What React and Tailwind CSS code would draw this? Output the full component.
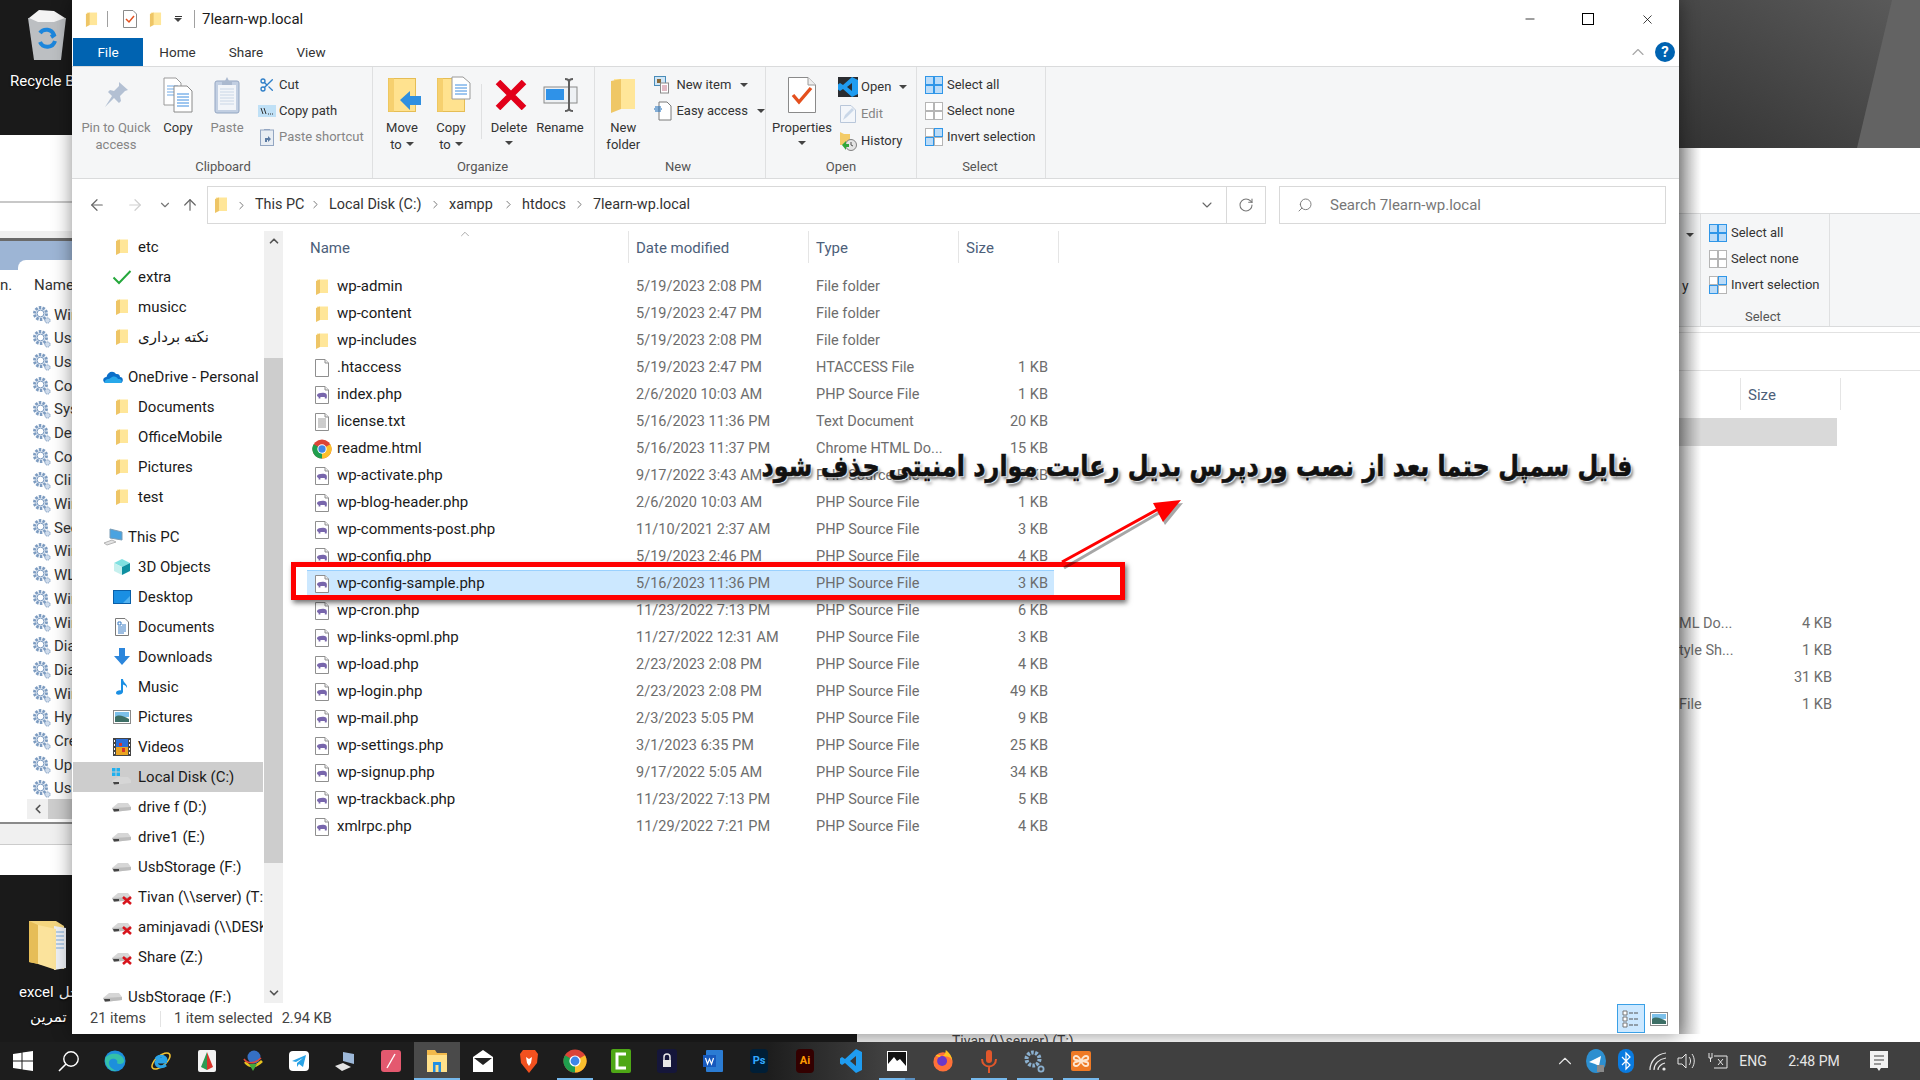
import { Scissors, ChevronDown, ChevronUp, ChevronLeft, ChevronRight, ArrowLeft, ArrowRight, ArrowUp, RotateCw, Search, Minus, X } from "lucide-react";

const FILES = [
  ["wp-admin", "5/19/2023 2:08 PM", "File folder", "", "folder"],
  ["wp-content", "5/19/2023 2:47 PM", "File folder", "", "folder"],
  ["wp-includes", "5/19/2023 2:08 PM", "File folder", "", "folder"],
  [".htaccess", "5/19/2023 2:47 PM", "HTACCESS File", "1 KB", "blank"],
  ["index.php", "2/6/2020 10:03 AM", "PHP Source File", "1 KB", "php"],
  ["license.txt", "5/16/2023 11:36 PM", "Text Document", "20 KB", "txt"],
  ["readme.html", "5/16/2023 11:37 PM", "Chrome HTML Do...", "15 KB", "chrome"],
  ["wp-activate.php", "9/17/2022 3:43 AM", "PHP Source File", "7 KB", "php"],
  ["wp-blog-header.php", "2/6/2020 10:03 AM", "PHP Source File", "1 KB", "php"],
  ["wp-comments-post.php", "11/10/2021 2:37 AM", "PHP Source File", "3 KB", "php"],
  ["wp-config.php", "5/19/2023 2:46 PM", "PHP Source File", "4 KB", "php"],
  ["wp-config-sample.php", "5/16/2023 11:36 PM", "PHP Source File", "3 KB", "php"],
  ["wp-cron.php", "11/23/2022 7:13 PM", "PHP Source File", "6 KB", "php"],
  ["wp-links-opml.php", "11/27/2022 12:31 AM", "PHP Source File", "3 KB", "php"],
  ["wp-load.php", "2/23/2023 2:08 PM", "PHP Source File", "4 KB", "php"],
  ["wp-login.php", "2/23/2023 2:08 PM", "PHP Source File", "49 KB", "php"],
  ["wp-mail.php", "2/3/2023 5:05 PM", "PHP Source File", "9 KB", "php"],
  ["wp-settings.php", "3/1/2023 6:35 PM", "PHP Source File", "25 KB", "php"],
  ["wp-signup.php", "9/17/2022 5:05 AM", "PHP Source File", "34 KB", "php"],
  ["wp-trackback.php", "11/23/2022 7:13 PM", "PHP Source File", "5 KB", "php"],
  ["xmlrpc.php", "11/29/2022 7:21 PM", "PHP Source File", "4 KB", "php"],
];

const NAV = [
  ["etc", "folder", 0],
  ["extra", "check", 0],
  ["musicc", "folder", 0],
  ["نکته برداری", "folder", 0],
  ["OneDrive - Personal", "cloud", 1],
  ["Documents", "folder", 0],
  ["OfficeMobile", "folder", 0],
  ["Pictures", "folder", 0],
  ["test", "folder", 0],
  ["This PC", "pc", 1],
  ["3D Objects", "cube", 0],
  ["Desktop", "desktop", 0],
  ["Documents", "docs", 0],
  ["Downloads", "down", 0],
  ["Music", "music", 0],
  ["Pictures", "pics", 0],
  ["Videos", "video", 0],
  ["Local Disk (C:)", "cdrive", 0],
  ["drive f (D:)", "drive", 0],
  ["drive1 (E:)", "drive", 0],
  ["UsbStorage (F:)", "drive", 0],
  ["Tivan (\\\\server) (T:)", "xdrive", 0],
  ["aminjavadi (\\\\DESKTOP)", "xdrive", 0],
  ["Share (Z:)", "xdrive", 0],
  ["UsbStorage (F:)", "drive", 1],
];

const CRUMBS = [
  ["This PC", "w-[74px]"],
  ["Local Disk (C:)", "w-[120px]"],
  ["xampp", "w-[73px]"],
  ["htdocs", "w-[71px]"],
];

const SERVICES = ["Win", "Use", "Use", "Com", "Sys", "Dev", "Com", "Cli", "Win", "Sec", "Win", "WLA", "Win", "Win", "Dia", "Dia", "Win", "Hyp", "Cre", "Upd", "Use"];

function FolderSm({ className = "w-[14px] h-[18px]" }) {
  return (
    <svg className={className} viewBox="0 0 14 18">
      <path d="M2 1.5H13V15H2Z" fill="#ffe699" />
      <path d="M1 3L5 1.5V15L1 17Z" fill="#eec566" />
    </svg>
  );
}

function PageBase({ children }) {
  return (
    <svg className="w-[14px] h-[18px]" viewBox="0 0 14 18">
      <path d="M.5.5H10L13.5 4V17.5H.5Z" fill="#fff" stroke="#8f8f8f" />
      <path d="M10 .5V4H13.5" fill="#eee" stroke="#8f8f8f" />
      {children}
    </svg>
  );
}

function Chrome({ className = "w-5 h-5" }) {
  return (
    <svg className={className} viewBox="0 0 24 24">
      <circle cx="12" cy="12" r="11.5" fill="#dc4437" />
      <path d="M12 12L22 6.2A11.5 11.5 0 0 1 12 23.5Z" fill="#fbc02d" />
      <path d="M12 12V23.5A11.5 11.5 0 0 1 2 6.2Z" fill="#1f9e4d" />
      <circle cx="12" cy="12" r="5.6" fill="#fff" />
      <circle cx="12" cy="12" r="4.4" fill="#3f86e8" />
    </svg>
  );
}

function FileIcon({ kind }) {
  if (kind === "folder") return <FolderSm />;
  if (kind === "chrome") return <Chrome />;
  if (kind === "blank") return <PageBase />;
  if (kind === "txt")
    return (
      <PageBase>
        <path d="M3 6h8M3 8h8M3 10h8M3 12h8M3 14h8" stroke="#9a9a9a" />
      </PageBase>
    );
  return (
    <PageBase>
      <path d="M2 9C2.5 6.8 9 6 11 7.6C12.2 8.6 12 11 11.6 12.6H9.8V11H5.4V12.6H3.6V11C2.6 10.8 2 10 2 9Z" fill="#7866ac" />
    </PageBase>
  );
}

function Drive({ cross }) {
  return (
    <svg className="w-[22px] h-[16px]" viewBox="0 0 22 16">
      <path d="M1 9L7 4H17L20 8V11L3 13Z" fill="#d6d6d6" />
      <path d="M1 9L20 8V11L3 13Z" fill="#bcbcbc" />
      <path d="M2 10L8 10V12L3 12.6Z" fill="#444" />
      {cross && <path d="M12 8L20 15M20 8L12 15" stroke="#d8141c" strokeWidth="2.6" />}
    </svg>
  );
}

function NavIcon({ kind }) {
  if (kind === "folder") return <FolderSm />;
  if (kind === "drive") return <Drive />;
  if (kind === "xdrive") return <Drive cross />;
  if (kind === "check")
    return (
      <svg className="w-5 h-4" viewBox="0 0 20 16">
        <path d="M1.5 8.5L7 14L18.5 2" fill="none" stroke="#25a83c" strokeWidth="2" />
      </svg>
    );
  if (kind === "cloud")
    return (
      <svg className="w-5 h-[14px]" viewBox="0 0 20 14">
        <path d="M2 13C-1 11 0 7 3.5 7C4.5 2 10 0 13 4C16 3.5 17 5.5 17 7C20 7 21 11 18 13Z" fill="#0a6fc9" />
        <path d="M2 13C1 11 3 9 6 9L9 7C12 6 14 7 15 9C18 8.5 20 11 18 13Z" fill="#28a8ea" />
      </svg>
    );
  if (kind === "pc")
    return (
      <svg className="w-5 h-[18px]" viewBox="0 0 20 18">
        <path d="M7 1L19 4V12L7 10Z" fill="#4aa3e0" stroke="#7a9cb5" />
        <path d="M1 15L9 12L13 14L4 17Z" fill="#e3e3e3" stroke="#b5b5b5" />
      </svg>
    );
  if (kind === "cube")
    return (
      <svg className="w-[18px] h-[18px]" viewBox="0 0 18 18">
        <path d="M9 1L17 5L9 9L1 5Z" fill="#7fe0e0" />
        <path d="M1 5L9 9V17L1 13Z" fill="#c6f0ee" />
        <path d="M17 5L9 9V17L17 13Z" fill="#0e8fa0" />
      </svg>
    );
  if (kind === "desktop")
    return (
      <svg className="w-[18px] h-[14px]" viewBox="0 0 18 14">
        <rect x=".5" y=".5" width="17" height="13" fill="#1a8fe3" stroke="#0a5fa8" />
        <path d="M10 13L17 6V13Z" fill="#54b3f0" />
      </svg>
    );
  if (kind === "docs")
    return (
      <svg className="w-[14px] h-[18px]" viewBox="0 0 14 18">
        <path d="M.5.5H10L13.5 4V17.5H.5Z" fill="#fff" stroke="#7a7a7a" />
        <path d="M3 4h3v3H3ZM7 7h4M3 9h8M3 11h8M3 13h8M3 15h6" stroke="#3b7dc4" fill="none" />
      </svg>
    );
  if (kind === "down")
    return (
      <svg className="w-[18px] h-[18px]" viewBox="0 0 18 18">
        <path d="M6 0H12V8H17L9 17L1 8H6Z" fill="#2c86dc" />
      </svg>
    );
  if (kind === "music")
    return (
      <svg className="w-[14px] h-[18px]" viewBox="0 0 14 18">
        <path d="M6 1H8C8 5 13 6 12 10C11 7.5 9.5 7 8 6.5V14C8 16.5 1 18 1 15C1 13 4 12 6 12.5Z" fill="#1a8fe3" />
      </svg>
    );
  if (kind === "pics")
    return (
      <svg className="w-[18px] h-[14px]" viewBox="0 0 18 14">
        <rect x=".5" y=".5" width="17" height="13" fill="#fff" stroke="#8a8a8a" />
        <rect x="2" y="2" width="14" height="5" fill="#7cc0ea" />
        <path d="M2 7C6 4 10 6 16 9V12H2Z" fill="#3d6f66" />
      </svg>
    );
  if (kind === "video")
    return (
      <svg className="w-[18px] h-[18px]" viewBox="0 0 18 18">
        <rect width="18" height="18" fill="#444" />
        <rect x="3" y="1" width="12" height="8" fill="#2b6ed8" />
        <rect x="3" y="9" width="12" height="8" fill="#e9a321" />
        <path d="M6 5h3v3H6ZM9 10h3v4H9Z" fill="#d8342a" />
        <path d="M1 2h1v2H1ZM1 6h1v2H1ZM1 10h1v2H1ZM1 14h1v2H1ZM16 2h1v2h-1ZM16 6h1v2h-1ZM16 10h1v2h-1ZM16 14h1v2h-1Z" fill="#fff" />
      </svg>
    );
  return (
    <svg className="w-[22px] h-[20px]" viewBox="0 0 22 20">
      <path d="M1 14L7 10H17L20 13V16L3 18Z" fill="#d6d6d6" />
      <path d="M2 15L8 15V17L3 17.6Z" fill="#444" />
      <path d="M1 1h3.5v3.5H1ZM5.5 1H9v3.5H5.5ZM1 5.5h3.5V9H1ZM5.5 5.5H9V9H5.5Z" fill="#1fb0ef" />
    </svg>
  );
}

function Gear() {
  return (
    <svg className="w-5 h-5 shrink-0" viewBox="0 0 20 20">
      <circle cx="8.5" cy="8.5" r="6" fill="#dde6f1" stroke="#7c9bc0" strokeWidth="3" strokeDasharray="2.4 1.3" />
      <circle cx="8.5" cy="8.5" r="3.4" fill="#fff" stroke="#7c9bc0" />
      <circle cx="15.5" cy="15.5" r="2.6" fill="#cfdcec" stroke="#7c9bc0" strokeDasharray="1.5 .8" />
    </svg>
  );
}

function Caret({ className = "" }) {
  return (
    <svg className={`inline-block w-[8px] h-[4px] ${className}`} viewBox="0 0 8 4">
      <path d="M0 0H8L4 4Z" fill="#444" />
    </svg>
  );
}

function BigBtn({ className, icon, lines, caret, muted, iconClass = "" }) {
  return (
    <div className={`flex flex-col items-center ${className}`}>
      <div className={`h-[49px] flex items-center justify-center ${iconClass}`}>{icon}</div>
      {lines.map((l, i) => (
        <div key={l} className={`h-[17px] leading-[17px] whitespace-nowrap ${muted ? "text-[#858585]" : "text-[#333]"}`}>
          {l}
          {caret === "inline" && i === lines.length - 1 && <Caret className="ml-1 mb-[3px]" />}
        </div>
      ))}
      {caret === "below" && <div className="h-[17px] leading-[12px]"><Caret /></div>}
    </div>
  );
}

function SmallBtn({ icon, text, muted, caret, gap = "gap-[3px]", iconBox = "w-[18px]", height = "h-[26px]" }) {
  return (
    <div className={`${height} flex items-center ${gap}`}>
      <div className={`${iconBox} flex justify-center shrink-0`}>{icon}</div>
      <span className={`whitespace-nowrap ${muted ? "text-[#858585]" : "text-[#333]"}`}>{text}</span>
      {caret && <Caret className="ml-[5px]" />}
    </div>
  );
}

function Group({ className, label, children, labelClass = "" }) {
  return (
    <div className={`flex flex-col h-full border-r border-[#dfe0e1] ${className}`}>
      <div className="flex h-[92px] pt-[3px]">{children}</div>
      <div className={`flex-1 text-center text-[#555] leading-[22px] ${labelClass}`}>{label}</div>
    </div>
  );
}

function SelectIcon({ mode }) {
  const on = "#bcdcf8";
  const stroke = mode === "none" ? "#b5b5b5" : "#2f96e8";
  const cells = [[1, 1], [10, 1], [1, 10], [10, 10]];
  return (
    <svg className="w-[18px] h-[18px]" viewBox="0 0 18 18">
      {cells.map(([x, y], i) => {
        const active = mode === "all" || (mode === "invert" && (i === 1 || i === 2));
        return <rect key={i} x={x - 0.5} y={y - 0.5} width="8" height="8" fill={active ? on : "#fff"} stroke={active ? stroke : "#b5b5b5"} />;
      })}
    </svg>
  );
}

const CopyDoc = (
  <svg className="w-[30px] h-9" viewBox="0 0 30 36">
    <path d="M1 1H13L18 6V28H1Z" fill="#fff" stroke="#9a9a9a" />
    <path d="M4 9h11M4 12h11M4 15h11M4 18h11" stroke="#6ea9e6" />
    <path d="M11 9H24L29 14V35H11Z" fill="#fff" stroke="#8a8a8a" />
    <path d="M14 17h12M14 20h12M14 23h12M14 26h12M14 29h12" stroke="#3f8ee0" />
  </svg>
);

const PasteIcon = (
  <svg className="w-[26px] h-[38px]" viewBox="0 0 26 38">
    <rect x="1" y="5" width="24" height="32" rx="2" fill="#c2cfe2" stroke="#93a6c2" />
    <rect x="4" y="9" width="18" height="25" fill="#f2f5f9" />
    <path d="M6 13h14M6 16h14M6 19h14M6 22h14M6 25h14M6 28h14" stroke="#c9d6e6" />
    <path d="M8 5h3l2-4 2 4h3v4H8Z" fill="#aab9cf" />
  </svg>
);

const PinIcon = (
  <svg className="w-[26px] h-[27px]" viewBox="0 0 26 27">
    <path d="M16 1L25 9L22 10L17 15L18 20L16 22L11 17L2 26L9 15L5 11L7 9L11 10L16 5Z" fill="#b3c0d3" />
  </svg>
);

function YellowFolder({ children }) {
  return (
    <svg className="w-[34px] h-[38px]" viewBox="0 0 34 38">
      <rect x=".5" y="2.5" width="27" height="33" fill="#ffe28f" stroke="#e5bd55" />
      <path d="M.5 2.5H6V35.5H.5Z" fill="#f6d06f" />
      {children}
    </svg>
  );
}

const MoveTo = (
  <YellowFolder>
    <path d="M12 24L22 15V20H33V29H22V34Z" fill="#2f8fe0" />
  </YellowFolder>
);

const CopyTo = (
  <YellowFolder>
    <path d="M15 1H26L33 7V23H15Z" fill="#fff" stroke="#9a9a9a" />
    <path d="M18 9h12M18 12h12M18 15h12M18 18h12" stroke="#3f8ee0" />
  </YellowFolder>
);

const DeleteIcon = (
  <svg className="w-8 h-[30px]" viewBox="0 0 32 30">
    <path d="M3 2L29 28M29 2L3 28" stroke="#e2001a" strokeWidth="6.5" />
  </svg>
);

const RenameIcon = (
  <svg className="w-9 h-[34px]" viewBox="0 0 36 34">
    <rect x="1" y="9" width="33" height="16" fill="#eef1f4" stroke="#8a8a8a" />
    <rect x="3" y="11" width="18" height="11" fill="#2f92e8" />
    <path d="M22 1c3 0 4 1 4 3V30c0 2 1 3 4 3M30 1c-3 0-4 1-4 3M26 30c0 2-1 3-4 3" fill="none" stroke="#5f5f5f" strokeWidth="2" />
  </svg>
);

const NewFolder = (
  <svg className="w-[26px] h-9" viewBox="0 0 26 36">
    <path d="M4 2H25V32H4Z" fill="#ffe699" />
    <path d="M1 4L11 2V32L1 36Z" fill="#efc766" />
  </svg>
);

const NewItem = (
  <svg className="w-[18px] h-[18px]" viewBox="0 0 18 18">
    <rect x=".5" y=".5" width="11" height="9" fill="#cfe6f7" stroke="#4a8cb8" />
    <rect x="3" y="3" width="4" height="4" fill="#8a6a3a" />
    <rect x="6.5" y="7" width="8" height="10" fill="#fff" stroke="#8a8a8a" />
    <path d="M8 10h5M8 12h5M8 14h5" stroke="#c2748a" />
  </svg>
);

const EasyAccess = (
  <svg className="w-[18px] h-5" viewBox="0 0 18 20">
    <path d="M5 1H13L17 5V19H5Z" fill="#fff" stroke="#7a7a7a" />
    <path d="M1 6h6M0 8h8M1 10h6" stroke="#1469b8" />
  </svg>
);

const PropertiesIcon = (
  <svg className="w-7 h-9" viewBox="0 0 28 36">
    <path d="M.5.5H20L27.5 8V35.5H.5Z" fill="#fff" stroke="#8a8a8a" />
    <path d="M20 .5V8H27.5" fill="#eee" stroke="#9a9a9a" />
    <path d="M5 18L11 25L23 11" fill="none" stroke="#e4501e" strokeWidth="3.4" />
  </svg>
);

const VsCodeSquare = (
  <svg className="w-5 h-5" viewBox="0 0 20 20">
    <rect width="20" height="20" fill="#2a2c30" />
    <path d="M14 0L20 3V17L14 20L5 12L2 14L0 12.5V7.5L2 6L5 8ZM14 6L9 10L14 14Z" fill="#1f9cf0" />
  </svg>
);

const EditIcon = (
  <svg className="w-4 h-[18px]" viewBox="0 0 16 18">
    <path d="M.5.5H11L15.5 5V17.5H.5Z" fill="#f3f6fa" stroke="#b9c7da" />
    <path d="M3 15L5 10L12 3L14 5L7 12Z" fill="#c9d7e8" />
  </svg>
);

const HistoryIcon = (
  <svg className="w-[18px] h-5" viewBox="0 0 18 20">
    <path d="M1 1L5 3H11V14H1Z" fill="#f3cb68" />
    <circle cx="12" cy="14" r="5.5" fill="#e4e4e4" stroke="#808080" />
    <path d="M12 11V14L14 15" fill="none" stroke="#555" />
    <path d="M3 14L7 10V13H10V16H7V19Z" fill="#2fa63c" />
  </svg>
);

const CopyPathIcon = (
  <svg className="w-[18px] h-[12px]" viewBox="0 0 18 12">
    <rect width="18" height="12" fill="#bfe0f6" />
    <path d="M3 3L5 9M6 3L8 9" stroke="#333" />
    <path d="M10 9h1M12 9h1M14 9h1" stroke="#333" />
  </svg>
);

const PasteShortcut = (
  <svg className="w-[14px] h-[18px]" viewBox="0 0 14 18">
    <rect x=".5" y="2" width="13" height="15.5" fill="#e8edf3" stroke="#93a6c2" />
    <path d="M4 2h6v-1H4Z" fill="#93a6c2" />
    <path d="M5 14V10H8V8L11 11L8 14V12H7V14Z" fill="#5c7ba3" />
  </svg>
);

function Wallpaper() {
  return (
    <svg className="absolute left-[1679px] top-0 w-[241px] h-[148px]" viewBox="0 0 241 148" preserveAspectRatio="none">
      <defs>
        <linearGradient id="wall" x1="0" y1="1" x2="1" y2="0">
          <stop offset="0" stopColor="#333" />
          <stop offset="1" stopColor="#5c5c5c" />
        </linearGradient>
      </defs>
      <rect width="241" height="148" fill="url(#wall)" />
      <path d="M213 0H241V148H178Z" fill="#636363" />
    </svg>
  );
}

function RecycleBin() {
  return (
    <svg className="w-[46px] h-[54px]" viewBox="0 0 46 54">
      <path d="M4 10H42L37 52H10Z" fill="#d9dde0" fillOpacity=".85" />
      <path d="M5 10L15 2L30 3L41 10L30 14L14 14Z" fill="#f4f4f4" />
      <path d="M16 25A8 8 0 0 1 30 27L27 29M31 33A8 8 0 0 1 16 34" fill="none" stroke="#1c86dc" strokeWidth="4" />
    </svg>
  );
}

function ExcelFolder() {
  return (
    <svg className="w-[40px] h-[50px]" viewBox="0 0 40 50">
      <path d="M1 1H28L36 6V49L1 42Z" fill="#f4d67f" />
      <path d="M26 6L38 8V48L26 50Z" fill="#eef1f6" />
      <path d="M28 12h8M28 16h8M28 20h8M28 24h8M28 28h8" stroke="#7ba9d6" />
      <path d="M10 5L28 9V50L10 44Z" fill="#fbe39c" />
      <path d="M1 1L10 5V44L1 42Z" fill="#e6bd57" />
    </svg>
  );
}

function TaskIcon({ kind }) {
  switch (kind) {
    case "start":
      return (
        <svg className="w-5 h-5" viewBox="0 0 20 20">
          <path d="M0 3L8.5 1.8V9.5H0ZM9.5 1.6L20 0V9.5H9.5ZM0 10.5H8.5V18.2L0 17ZM9.5 10.5H20V20L9.5 18.4Z" fill="#fff" />
        </svg>
      );
    case "search":
      return (
        <svg className="w-[22px] h-[22px]" viewBox="0 0 22 22">
          <circle cx="13" cy="9" r="7.2" fill="none" stroke="#fff" strokeWidth="1.4" />
          <path d="M8 14L1 21" stroke="#fff" strokeWidth="1.6" />
        </svg>
      );
    case "edge":
      return (
        <svg className="w-[22px] h-[22px]" viewBox="0 0 22 22">
          <circle cx="11" cy="11" r="10.5" fill="#1d8fdc" />
          <path d="M1 9C3 3 17 1 20 10C21 14 15 15 13 13C15 10 9 7 6 10C3 13 6 19 13 21C6 22 1 16 1 9Z" fill="#35c1a8" />
        </svg>
      );
    case "ie":
      return (
        <svg className="w-[22px] h-[22px]" viewBox="0 0 22 22">
          <ellipse cx="11" cy="11" rx="11" ry="5" fill="none" stroke="#f4c430" strokeWidth="1.5" transform="rotate(-40 11 11)" />
          <path d="M17 12H6C6 17 12 18 16 15M6 9.5C7 5 15 5 16 9.5H6" fill="none" stroke="#2aa3e6" strokeWidth="3" />
        </svg>
      );
    case "sheet":
      return (
        <svg className="w-[18px] h-[22px]" viewBox="0 0 18 22">
          <rect width="18" height="22" rx="2" fill="#f2f2f2" />
          <path d="M9 2L15 17L9 20Z" fill="#d8342a" />
          <path d="M9 2L3 17L9 20Z" fill="#2c9a52" />
        </svg>
      );
    case "idm":
      return (
        <svg className="w-[22px] h-[22px]" viewBox="0 0 22 22">
          <circle cx="12" cy="7" r="6.5" fill="#3570c4" />
          <path d="M3 12C8 18 14 17 20 11" fill="none" stroke="#e8c31e" strokeWidth="2.6" />
          <path d="M2 9C6 15 14 13 19 8" fill="none" stroke="#e34a3a" strokeWidth="1.6" />
          <path d="M7 14L15 14L11 21Z" fill="#43a83c" />
        </svg>
      );
    case "telegram":
      return (
        <svg className="w-5 h-5" viewBox="0 0 20 20">
          <rect width="20" height="20" rx="4" fill="#fff" />
          <path d="M3 10L17 4L14 16L10 13L8 16V12L14 7L7 11Z" fill="#2aa3e6" />
        </svg>
      );
    case "remote":
      return (
        <svg className="w-[22px] h-[22px]" viewBox="0 0 22 22">
          <path d="M9 2L20 4V14L9 11Z" fill="#9db8d8" />
          <path d="M1 16L9 13L17 17L8 21Z" fill="#e4e4e4" />
        </svg>
      );
    case "pen":
      return (
        <svg className="w-5 h-[22px]" viewBox="0 0 20 22">
          <rect width="20" height="22" rx="3" fill="#e4596f" />
          <path d="M6 18L14 4" stroke="#fff" strokeWidth="1.4" />
        </svg>
      );
    case "explorer":
      return (
        <svg className="w-[22px] h-[24px]" viewBox="0 0 22 24">
          <path d="M1 1H9L11 4H21V9H1Z" fill="#f2b94b" />
          <rect x="1" y="6" width="20" height="17" fill="#ffe08a" />
          <rect x="7" y="13" width="8" height="10" fill="#1f8fe3" />
          <rect x="9.5" y="16" width="3" height="7" fill="#ffe08a" />
        </svg>
      );
    case "mail":
      return (
        <svg className="w-5 h-[22px]" viewBox="0 0 20 22">
          <path d="M0 7L10 0L20 7V22H0Z" fill="#fff" />
          <path d="M1 8H19L10 15Z" fill="#222" />
        </svg>
      );
    case "brave":
      return (
        <svg className="w-5 h-6" viewBox="0 0 20 24">
          <path d="M4 1H16L19 5L18 14L10 24L2 14L1 5Z" fill="#f2511f" />
          <path d="M7 8L10 10L13 8L12 14L10 17L8 14Z" fill="#fff" />
        </svg>
      );
    case "chrome":
      return <Chrome className="w-6 h-6" />;
    case "camtasia":
      return (
        <svg className="w-5 h-6" viewBox="0 0 20 24">
          <rect width="20" height="24" rx="2" fill="#4ea716" />
          <path d="M15 5H6V19H15" fill="none" stroke="#fff" strokeWidth="3" />
        </svg>
      );
    case "lock":
      return (
        <svg className="w-5 h-6" viewBox="0 0 20 24">
          <rect width="20" height="24" rx="3" fill="#15163a" />
          <rect x="6" y="11" width="8" height="7" fill="#e8e8e8" />
          <path d="M7 11V8A3 3 0 0 1 13 8V11" fill="none" stroke="#e8e8e8" strokeWidth="1.5" />
        </svg>
      );
    case "word":
      return (
        <svg className="w-5 h-[22px]" viewBox="0 0 20 22">
          <rect x="3" width="17" height="22" rx="1" fill="#2b7cd3" />
          <rect y="5" width="13" height="12" fill="#185abd" />
          <path d="M2.5 8L4.5 14L6.5 9L8.5 14L10.5 8" fill="none" stroke="#fff" strokeWidth="1.2" />
        </svg>
      );
    case "ps":
      return (
        <div className="w-[18px] h-[24px] rounded-sm bg-[#001e36] text-[#31a8ff] text-[11px] font-bold flex items-center justify-center">Ps</div>
      );
    case "ai":
      return (
        <div className="w-[18px] h-[24px] rounded-sm bg-[#330000] text-[#ff9a00] text-[11px] font-bold flex items-center justify-center">Ai</div>
      );
    case "vscode":
      return (
        <svg className="w-[22px] h-6" viewBox="0 0 22 24">
          <path d="M16 0L22 3V21L16 24L5 14L2 16L0 14.5V9.5L2 8L5 10ZM16 7L10 12L16 17Z" fill="#1f9cf0" />
        </svg>
      );
    case "photos":
      return (
        <svg className="w-[20px] h-[20px]" viewBox="0 0 20 20">
          <rect x=".5" y=".5" width="19" height="19" fill="#111" stroke="#fff" />
          <path d="M1 19V13L7 6L10 10L13 8L19 15V19Z" fill="#fff" />
        </svg>
      );
    case "firefox":
      return (
        <svg className="w-[22px] h-[22px]" viewBox="0 0 24 24">
          <circle cx="12" cy="13" r="10.5" fill="#ff7139" />
          <circle cx="11" cy="12" r="5.4" fill="#6b38c9" />
          <path d="M4 6C7 4 9 7 12 6C14 5 15 3 15 0C19 3 22 7 22 12C21 8 18 7 15 7C13 7 11 5 8 8Z" fill="#ffc11f" />
        </svg>
      );
    case "mic":
      return (
        <svg className="w-[18px] h-6" viewBox="0 0 18 24">
          <rect x="6" y="1" width="6" height="13" rx="3" fill="#e2572b" />
          <path d="M2 10C2 20 16 20 16 10M9 18V24" fill="none" stroke="#e2572b" strokeWidth="2" />
        </svg>
      );
    case "gear":
      return (
        <svg className="w-[22px] h-6" viewBox="0 0 22 24">
          <circle cx="9" cy="10" r="6.5" fill="none" stroke="#8bb0cf" strokeWidth="4" strokeDasharray="2.6 1.4" />
          <circle cx="17" cy="20" r="2.6" fill="none" stroke="#8bb0cf" strokeWidth="1.8" />
        </svg>
      );
    default:
      return (
        <svg className="w-[20px] h-[20px]" viewBox="0 0 20 20">
          <rect width="20" height="20" rx="2" fill="#ef7a25" />
          <path d="M5 5C8 5 9 8 10 10C11 8 12 5 15 5C18 5 18 9 15 9C13 9 7 11 5 11C2 11 2 15 5 15C8 15 9 12 10 10C11 12 12 15 15 15C18 15 18 11 15 11C13 11 7 9 5 9C2 9 2 5 5 5Z" fill="none" stroke="#fde6d0" strokeWidth="1.8" />
        </svg>
      );
  }
}

const TASK = [
  ["start"], ["search"], ["edge"], ["ie"], ["sheet"], ["idm"], ["telegram"], ["remote"], ["pen"],
  ["explorer", "active"], ["mail"], ["brave"], ["chrome", "open"], ["camtasia"], ["lock"], ["word"], ["ps"], ["ai"], ["vscode"],
  ["photos", "stack"], ["firefox"], ["mic", "open"], ["gear", "open"], ["xampp", "open"],
];

function Taskbar() {
  return (
    <div className="absolute left-0 bottom-0 w-full h-[38px] flex bg-[linear-gradient(90deg,#1d1d1d_0%,#1d1d1d_40%,#404040_46%,#404040_100%)] text-[#e6e6e6]">
      {TASK.map(([kind, state], i) => (
        <div key={i} className={`relative w-[46px] h-full flex items-center justify-center ${state === "active" ? "bg-[#4a4a4a]" : ""}`}>
          <TaskIcon kind={kind} />
          {state && <div className={`absolute bottom-0 h-[2px] bg-[#76b9ed] ${state === "active" ? "inset-x-0" : "inset-x-[5px]"}`} />}
          {state === "stack" && <div className="absolute bottom-0 right-[5px] w-[10px] h-[2px] bg-[#5a8fc0]" />}
        </div>
      ))}
      <div className="flex-1" />
      <div className="flex items-center text-[14px]">
        <ChevronUp className="w-[22px] h-[22px] mr-[10px]" strokeWidth={1.2} />
        <svg className="w-5 h-6 mr-[12px]" viewBox="0 0 20 24">
          <ellipse cx="10" cy="12" rx="10" ry="12" fill="#2d8fd0" />
          <path d="M3 13L15 7L13 17L9 15Z" fill="#fff" />
          <rect x="11" y="16" width="7" height="7" fill="#8a8a8a" />
        </svg>
        <svg className="w-[16px] h-6 mr-[14px]" viewBox="0 0 16 24">
          <rect width="16" height="24" rx="8" fill="#0a7be0" />
          <path d="M4 8L12 16L8 20V4L12 8L4 16" fill="none" stroke="#fff" strokeWidth="1.2" />
        </svg>
        <svg className="w-5 h-5 mr-[9px]" viewBox="0 0 20 20">
          <path d="M2 19C2 10 9 3 18 2M6 19C6 13 11 8 18 7M10 19C10 16 13 13 17 12" fill="none" stroke="#e6e6e6" strokeWidth="1.2" />
          <circle cx="16" cy="18" r="1.6" fill="#e6e6e6" />
        </svg>
        <svg className="w-5 h-5 mr-[11px]" viewBox="0 0 20 20">
          <path d="M1 7H5L9 3V17L5 13H1Z" fill="none" stroke="#e6e6e6" />
          <path d="M12 6C14 8 14 12 12 14M15 3C18 7 18 13 15 17" fill="none" stroke="#e6e6e6" />
        </svg>
        <svg className="w-5 h-5 mr-[10px]" viewBox="0 0 20 20">
          <path d="M1 2V7H4V2M2.5 7V11M6 5H19V17H6" fill="none" stroke="#e6e6e6" />
          <path d="M10 8L15 14M15 8L10 14" stroke="#e6e6e6" />
        </svg>
        <span className="w-[30px] text-center">ENG</span>
        <span className="w-[70px] ml-[11px] text-center">2:48 PM</span>
        <svg className="w-5 h-[24px] ml-[20px] mr-[31px]" viewBox="0 0 20 24">
          <path d="M1 2H19V19H12L10 22L8 19H1Z" fill="#f2f2f2" />
          <path d="M5 7H15M5 11H15M5 15H12" stroke="#404040" />
        </svg>
      </div>
    </div>
  );
}

function BackLeftWindow() {
  return (
    <div className="absolute left-0 top-[135px] w-[72px] h-[740px] bg-white overflow-hidden flex flex-col text-[15px] text-[#333]">
      <div className="h-[66px] shrink-0" />
      <div className="h-[2px] shrink-0 bg-[#c8c8c8]" />
      <div className="h-[28px] shrink-0" />
      <div className="h-[7px] shrink-0 bg-[#f0f0f0]" />
      <div className="h-[3px] shrink-0 bg-[#6a6a6a]" />
      <div className="h-[29px] shrink-0 bg-[#9db5d5] flex items-end justify-end">
        <div className="w-[54px] h-[10px] bg-white rounded-tl-[8px]" />
      </div>
      <div className="h-[33px] shrink-0 flex items-center justify-between whitespace-nowrap pb-[2px]">
        <span>n.</span>
        <span className="w-[38px]">Name</span>
      </div>
      <div className="h-[496px] shrink-0 overflow-hidden pl-[32px]">
        {SERVICES.map((s, i) => (
          <div key={i} className="h-[23.7px] flex items-center gap-[2px] whitespace-nowrap">
            <Gear />
            {s}
          </div>
        ))}
      </div>
      <div className="h-[20px] shrink-0 flex pl-[27px]">
        <div className="w-[21px] bg-[#f0f0f0] flex items-center justify-center">
          <ChevronLeft className="w-[14px] h-[14px] text-[#555]" strokeWidth={3} />
        </div>
        <div className="flex-1 bg-[#cdcdcd]" />
      </div>
      <div className="h-[3px] shrink-0" />
      <div className="h-[2px] shrink-0 bg-[#8a8a8a]" />
      <div className="h-[21px] shrink-0 bg-[#f0f0f0] border-b border-[#ccc]" />
    </div>
  );
}

function BackRightWindow() {
  return (
    <div className="absolute left-[1679px] top-[148px] w-[241px] h-[894px] bg-white overflow-hidden flex flex-col text-[13px] text-[#333]">
      <div className="h-[66px] shrink-0 border-b border-[#dadbdc]" />
      <div className="h-[113px] shrink-0 bg-[#f5f6f7] flex border-b border-[#dadbdc]">
        <div className="w-[21px] pl-[3px] flex flex-col">
          <div className="h-[36px] flex items-end pl-[4px] pb-[13px]"><Caret /></div>
          <div className="pt-[26px] text-[#333] text-[14px]">y</div>
        </div>
        <div className="w-[130px] border-x border-[#dfe0e1] flex flex-col pl-[8px]">
          <div className="flex flex-col pt-[6px] h-[93px]">
            <SmallBtn icon={<SelectIcon mode="all" />} text="Select all" gap="gap-[4px]" />
            <SmallBtn icon={<SelectIcon mode="none" />} text="Select none" gap="gap-[4px]" />
            <SmallBtn icon={<SelectIcon mode="invert" />} text="Invert selection" gap="gap-[4px]" />
          </div>
          <div className="pl-[36px] text-[#555]">Select</div>
        </div>
      </div>
      <div className="h-[6px] shrink-0 border-b border-[#e2e2e2]" />
      <div className="h-[38px] shrink-0 border-b border-[#e2e2e2]" />
      <div className="h-[32px] mt-[7px] shrink-0 flex">
        <div className="w-[62px] border-r border-[#e5e5e5]" />
        <div className="w-[100px] border-r border-[#e5e5e5] pl-[7px] leading-[35px] text-[15px] text-[#4c607a]">Size</div>
      </div>
      <div className="h-[28px] mt-[8px] w-[158px] shrink-0 bg-[#d9d9d9]" />
      <div className="mt-[163px] w-[153px] text-[#6d6d6d] text-[14.5px] pt-px">
        {[["ML Do...", "4 KB"], ["tyle Sh...", "1 KB"], ["", "31 KB"], ["File", "1 KB"]].map(([t, s]) => (
          <div key={s + t} className="h-[27px] flex justify-between items-center whitespace-nowrap">
            <span>{t}</span>
            <span>{s}</span>
          </div>
        ))}
      </div>
      <div className="absolute inset-y-0 left-0 w-[22px] bg-linear-to-r from-black/30 to-transparent" />
    </div>
  );
}

function MainWindow() {
  return (
    <div className="absolute left-[72px] top-0 w-[1607px] h-[1034px] bg-white shadow-[0_0_18px_rgba(0,0,0,0.45)] flex flex-col text-[14px] text-[#333]">
      {/* Title bar */}
      <div className="h-[38px] flex items-center shrink-0 relative">
        <div className="ml-[13px]"><FolderSm className="w-[13px] h-[17px]" /></div>
        <div className="w-px h-[16px] bg-[#a0a0a0] ml-[9px]" />
        <div className="ml-[15px]">
          <svg className="w-[14px] h-[18px]" viewBox="0 0 14 18">
            <path d="M.5.5H10L13.5 4V17.5H.5Z" fill="#fff" stroke="#8a8a8a" />
            <path d="M3 9L6 12L11 6" fill="none" stroke="#e4501e" strokeWidth="1.5" />
          </svg>
        </div>
        <div className="ml-[12px]"><FolderSm className="w-[13px] h-[17px]" /></div>
        <div className="ml-[12px] flex flex-col items-center gap-[1px]">
          <div className="w-[7px] h-px bg-[#333]" />
          <Caret />
        </div>
        <div className="w-px h-[18px] bg-[#a0a0a0] ml-[12px]" />
        <span className="ml-[7px] text-[15px] text-[#1a1a1a]">7learn-wp.local</span>
        <div className="ml-auto flex items-center text-black">
          <Minus className="w-[14px] h-[14px] mr-[45px]" strokeWidth={1.3} />
          <div className="w-[12px] h-[12px] border border-black mr-[46px]" />
          <X className="w-[15px] h-[15px] mr-[24px]" strokeWidth={1.2} />
        </div>
      </div>

      {/* Ribbon tabs */}
      <div className="h-[28px] flex items-stretch shrink-0 text-[13.5px] text-[#333]">
        <div className="w-[70px] ml-px bg-[#0063b1] text-white flex items-center justify-center">File</div>
        <div className="w-[69px] flex items-center justify-center">Home</div>
        <div className="w-[68px] flex items-center justify-center">Share</div>
        <div className="w-[62px] flex items-center justify-center">View</div>
        <div className="ml-auto flex items-center pr-[4px]">
          <ChevronUp className="w-[20px] h-[20px] text-[#a8a8a8] mr-[7px]" strokeWidth={1.4} />
          <div className="w-[20px] h-[20px] rounded-full bg-[#0063b1] text-white text-[15px] font-bold flex items-center justify-center">?</div>
        </div>
      </div>

      {/* Ribbon */}
      <div className="h-[113px] shrink-0 bg-[#f5f6f7] border-y border-[#dadbdc] flex text-[13px]">
        <Group className="w-[301px]" label="Clipboard" labelClass="pl-[2px]">
          <BigBtn className="w-[88px]" icon={PinIcon} lines={["Pin to Quick", "access"]} muted />
          <BigBtn className="w-[36px]" icon={CopyDoc} lines={["Copy"]} />
          <BigBtn className="w-[62px]" icon={PasteIcon} lines={["Paste"]} muted />
          <div className="flex flex-col pt-[2px]">
            <SmallBtn icon={<Scissors className="w-[16px] h-[18px] text-[#2f7fc8]" />} text="Cut" />
            <SmallBtn icon={CopyPathIcon} text="Copy path" />
            <SmallBtn icon={PasteShortcut} text="Paste shortcut" muted />
          </div>
        </Group>
        <Group className="w-[222px]" label="Organize" labelClass="pr-[2px]">
          <BigBtn className="w-[58px]" iconClass="pl-[6px]" icon={MoveTo} lines={["Move", "to"]} caret="inline" />
          <BigBtn className="w-[40px]" iconClass="pl-[6px]" icon={CopyTo} lines={["Copy", "to"]} caret="inline" />
          <div className="ml-[10px] mt-[14px] w-px h-[55px] bg-[#dfe0e1]" />
          <BigBtn className="w-[54px]" iconClass="pl-[3px]" icon={DeleteIcon} lines={["Delete"]} caret="below" />
          <BigBtn className="w-[48px]" iconClass="pl-[1px]" icon={RenameIcon} lines={["Rename"]} />
        </Group>
        <Group className="w-[171px]" label="New" labelClass="pr-[4px]">
          <BigBtn className="w-[60px]" icon={NewFolder} lines={["New", "folder"]} />
          <div className="flex flex-col ml-[3px] pt-[2px]">
            <SmallBtn icon={NewItem} text="New item" caret gap="gap-[4px]" />
            <SmallBtn icon={EasyAccess} text="Easy access" caret gap="gap-[4px]" />
          </div>
        </Group>
        <Group className="w-[151px]" label="Open">
          <BigBtn className="w-[72px]" icon={PropertiesIcon} lines={["Properties"]} caret="below" />
          <div className="flex flex-col pt-[3px]">
            <SmallBtn icon={VsCodeSquare} text="Open" caret iconBox="w-[20px]" height="h-[27px]" />
            <SmallBtn icon={EditIcon} text="Edit" muted iconBox="w-[20px]" height="h-[27px]" />
            <SmallBtn icon={HistoryIcon} text="History" iconBox="w-[20px]" height="h-[27px]" />
          </div>
        </Group>
        <Group className="w-[129px]" label="Select" labelClass="pr-[2px]">
          <div className="flex flex-col pl-[8px] pt-[2px]">
            <SmallBtn icon={<SelectIcon mode="all" />} text="Select all" gap="gap-[4px]" />
            <SmallBtn icon={<SelectIcon mode="none" />} text="Select none" gap="gap-[4px]" />
            <SmallBtn icon={<SelectIcon mode="invert" />} text="Invert selection" gap="gap-[4px]" />
          </div>
        </Group>
      </div>

      {/* Address row */}
      <div className="h-[52px] shrink-0 flex items-center text-[14.4px]">
        <div className="w-[135px] flex items-center shrink-0 pl-[16px]">
          <ArrowLeft className="w-[18px] h-[18px] text-[#666]" strokeWidth={1.6} />
          <ArrowRight className="w-[18px] h-[18px] ml-[20px] text-[#cfcfcf]" strokeWidth={1.6} />
          <ChevronDown className="w-[14px] h-[14px] ml-[14px] text-[#777]" strokeWidth={2} />
          <ArrowUp className="w-[18px] h-[18px] ml-[9px] text-[#666]" strokeWidth={1.6} />
        </div>
        <div className="w-[1059px] h-[38px] border border-[#d9d9d9] flex items-center shrink-0 text-[#333] pl-[6px]">
          <div className="w-[41px] flex items-center justify-between shrink-0 pr-[7px]">
            <FolderSm />
            <ChevronRight className="w-[13px] h-[13px] text-[#666]" strokeWidth={1.6} />
          </div>
          {CRUMBS.map(([label, width]) => (
            <div key={label} className={`${width} flex items-center justify-between pr-[7px] shrink-0 whitespace-nowrap`}>
              <span>{label}</span>
              <ChevronRight className="w-[13px] h-[13px] text-[#666]" strokeWidth={1.6} />
            </div>
          ))}
          <span className="whitespace-nowrap">7learn-wp.local</span>
          <ChevronDown className="ml-auto mr-[11px] w-[16px] h-[16px] text-[#666]" strokeWidth={1.6} />
          <div className="w-[39px] h-full border-l border-[#d9d9d9] flex items-center justify-center">
            <RotateCw className="w-[16px] h-[16px] text-[#777]" strokeWidth={1.6} />
          </div>
        </div>
        <div className="ml-[13px] w-[387px] h-[38px] border border-[#d9d9d9] flex items-center pl-[17px] text-[#777] text-[15px]">
          <Search className="w-[16px] h-[16px] -scale-x-100 text-[#777]" strokeWidth={1.4} />
          <span className="ml-[17px]">Search 7learn-wp.local</span>
        </div>
      </div>

      {/* Body */}
      <div className="flex h-[772px] shrink-0 text-[15px]">
        <div className="w-[192px] h-full overflow-hidden pt-px shrink-0 text-[#1a1a1a]">
          {NAV.map(([label, icon, root], i) => (
            <div
              key={i}
              className={`h-[30px] flex items-center whitespace-nowrap overflow-hidden mr-px ml-px
                ${i === 4 || i === 9 || i === 24 ? "mt-[10px]" : ""}
                ${i === 17 ? "bg-[#cdcdcd]" : ""}
                ${root ? "pl-[28px] gap-[3px]" : "pl-[37px] gap-[4px]"}`}
            >
              <div className="w-[24px] flex justify-center shrink-0"><NavIcon kind={icon} /></div>
              {label}
            </div>
          ))}
        </div>
        <div className="w-[19px] h-full bg-[#f0f0f0] flex flex-col shrink-0">
          <div className="h-[20px] flex items-center justify-center">
            <ChevronUp className="w-[14px] h-[14px] text-[#555]" strokeWidth={3} />
          </div>
          <div className="h-[107px]" />
          <div className="h-[505px] bg-[#cdcdcd]" />
          <div className="flex-1" />
          <div className="h-[20px] flex items-center justify-center">
            <ChevronDown className="w-[14px] h-[14px] text-[#555]" strokeWidth={3} />
          </div>
        </div>
        <div className="flex-1 min-w-0 relative">
          <div className="h-[32px] flex pl-[20px] text-[#4c607a] leading-[34px]">
            <div className="w-[326px] border-r border-[#e5e5e5] pl-[7px]">Name</div>
            <div className="w-[180px] border-r border-[#e5e5e5] pl-[7px]">Date modified</div>
            <div className="w-[150px] border-r border-[#e5e5e5] pl-[7px]">Type</div>
            <div className="w-[100px] border-r border-[#e5e5e5] pl-[7px]">Size</div>
          </div>
          <ChevronUp className="absolute left-[175px] -top-[4px] w-[14px] h-[14px] text-[#888]" strokeWidth={1.2} />
          <div className="mt-[10px] ml-[24px] w-[747px]">
            {FILES.map(([name, date, type, size, kind], i) => (
              <div
                key={name}
                className={`h-[27px] flex items-center whitespace-nowrap border-y ${i === 11 ? "bg-[#cce8ff] border-[#99d1ff]" : "border-transparent"}`}
              >
                <div className="w-[30px] flex justify-center shrink-0"><FileIcon kind={kind} /></div>
                <div className="w-[299px] shrink-0 text-[#1a1a1a]">{name}</div>
                <div className="w-[180px] shrink-0 text-[#6d6d6d] text-[14.5px]">{date}</div>
                <div className="w-[142px] shrink-0 text-[#6d6d6d] text-[14.5px] overflow-hidden">{type}</div>
                <div className="w-[90px] shrink-0 text-[#6d6d6d] text-[14.5px] text-right">{size}</div>
              </div>
            ))}
          </div>
        </div>
      </div>

      {/* Status bar */}
      <div className="flex-1 flex items-center pl-[18px] text-[14.5px] text-[#444]">
        <span>21 items</span>
        <div className="w-px h-[16px] bg-[#e3e3e3] ml-[14px]" />
        <span className="ml-[13px]">1 item selected</span>
        <span className="ml-[9px]">2.94 KB</span>
        <div className="ml-auto flex items-center mr-[11px]">
          <div className="w-[28px] h-[29px] bg-[#cce8ff] border border-[#3aa0e6] flex items-center justify-center">
            <svg className="w-[18px] h-[18px]" viewBox="0 0 18 18">
              <path d="M1 1h4v4H1ZM1 7h4v4H1ZM1 13h4v4H1Z" fill="#fff" stroke="#777" />
              <path d="M7 3h4M12 3h4M7 9h4M12 9h4M7 15h4M12 15h4" stroke="#555" />
            </svg>
          </div>
          <div className="ml-[5px]"><NavIcon kind="pics" /></div>
        </div>
      </div>
    </div>
  );
}

function Annotations() {
  return (
    <>
      <div className="absolute left-[291px] top-[562px] w-[834px] h-[38px] border-[5px] border-[#ff0000] shadow-[2px_3px_5px_rgba(0,0,0,0.55)]" />
      <svg className="absolute left-[1050px] top-[490px] w-[140px] h-[80px]" viewBox="0 0 140 80">
        <path d="M12 75L112 17" stroke="#000" strokeOpacity=".35" strokeWidth="3" transform="translate(2 3)" />
        <path d="M131 10L103 13L113 32Z" fill="#000" fillOpacity=".35" transform="translate(2 3)" />
        <path d="M12 72L112 17" stroke="#ff0000" strokeWidth="3" />
        <path d="M131 10L103 13L113 32Z" fill="#ff0000" />
      </svg>
      <div
        dir="rtl"
        className="absolute left-[758px] top-[444px] w-[878px] h-[44px] leading-[44px] text-center whitespace-nowrap font-bold text-[24px] scale-y-120 text-[#111] font-['DejaVu_Sans',sans-serif] [-webkit-text-stroke:0.5px_#111] [text-shadow:0_0_2px_#fff,1px_1px_1px_#fff,2px_3px_3px_rgba(0,0,0,0.6)]"
      >
        فایل سمپل حتما بعد از نصب وردپرس بدیل رعایت موارد امنیتی حذف شود
      </div>
    </>
  );
}

export default function App() {
  return (
    <div className="relative w-[1920px] h-[1080px] overflow-hidden bg-[#1a1a1a] font-['Roboto','DejaVu_Sans',sans-serif]">
      <Wallpaper />
      <BackLeftWindow />
      <BackRightWindow />

      {/* Strip of another window showing under the main one */}
      <div className="absolute left-[857px] top-[1034px] right-0 h-[8px] bg-white overflow-hidden">
        <div className="w-[210px] h-full bg-[#f0f0f0] text-[14px] leading-[14px] text-[#444] pl-[95px] whitespace-nowrap">Tivan (\\server) (T:)</div>
      </div>

      {/* Desktop icons */}
      <div className="absolute left-0 top-[8px] w-[72px] h-[120px] overflow-hidden flex flex-col items-end text-white text-[15px] [text-shadow:0_1px_2px_#000]">
        <div className="pr-[2px]"><RecycleBin /></div>
        <div className="w-[62px] mt-[8px] whitespace-nowrap">Recycle Bin</div>
      </div>
      <div className="absolute left-0 top-[920px] w-[72px] flex flex-col items-start text-white text-[15px] overflow-hidden [text-shadow:0_1px_2px_#000]">
        <div className="pl-[28px]"><ExcelFolder /></div>
        <div className="mt-[11px] pl-[19px] flex gap-[5px] whitespace-nowrap">
          <span>excel</span>
          <span>جل</span>
        </div>
        <div className="whitespace-nowrap mt-[2px] pl-[30px]">تمرین</div>
      </div>

      <MainWindow />
      <Annotations />
      <Taskbar />
    </div>
  );
}
